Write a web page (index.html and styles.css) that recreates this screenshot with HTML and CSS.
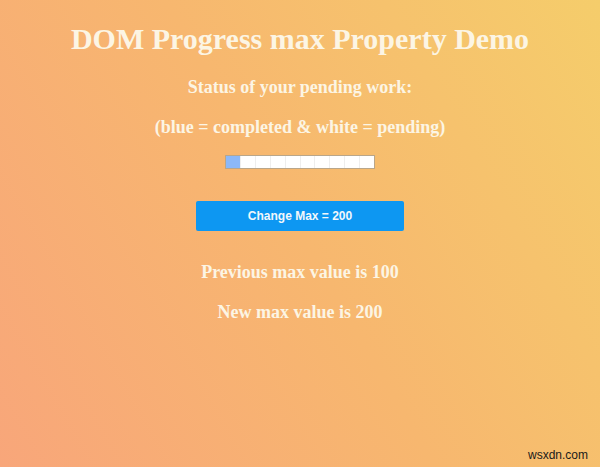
FILE: index.html
```html
<!DOCTYPE html>
<html>
<head>
<meta charset="utf-8">
<link rel="stylesheet" href="styles.css">
</head>
<body>
<div class="page">
  <h1 class="title">DOM Progress max Property Demo</h1>
  <p class="line">Status of your pending work:</p>
  <p class="line">(blue = completed &amp; white = pending)</p>
  <div class="bar">
    <span class="seg done"></span><span class="seg"></span><span class="seg"></span><span class="seg"></span><span class="seg"></span><span class="seg"></span><span class="seg"></span><span class="seg"></span><span class="seg"></span><span class="seg"></span>
  </div>
  <button class="btn">Change Max = 200</button>
  <p class="line result">Previous max value is 100</p>
  <p class="line">New max value is 200</p>
  <div class="mark">wsxdn.com</div>
</div>
</body>
</html>
```
FILE: styles.css
```css
html, body {
  margin: 0;
  height: 100%;
}
body {
  background: linear-gradient(60deg, #f8a67a 0%, #f7b76f 50%, #f5cd6b 100%);
  font-family: "Liberation Serif", "Times New Roman", serif;
  color: #fcf5e4;
  overflow: hidden;
}
.page {
  position: relative;
  height: 467px;
  display: flex;
  flex-direction: column;
  align-items: center;
  padding-top: 21px;
  box-sizing: border-box;
}
.title {
  margin: 0;
  font-size: 30px;
  font-weight: bold;
  line-height: 36px;
}
.line {
  margin: 0;
  margin-top: 18px;
  font-size: 18px;
  font-weight: bold;
  line-height: 24px;
}
.line + .line { margin-top: 16px; }
.bar {
  margin-top: 16px;
  width: 148px;
  height: 12px;
  border: 1px solid #b9a68a;
  display: flex;
  background: #fff;
}
.seg {
  flex: 1;
  border-left: 1px solid #eeeeee;
}
.seg:first-child { border-left: none; }
.seg.done {
  background: #8cb8f8;
}
.btn {
  margin-top: 32px;
  width: 208px;
  height: 30px;
  border: none;
  border-radius: 2px;
  background: #0d97f2;
  color: #f2f7fb;
  font-family: "Liberation Sans", Arial, sans-serif;
  font-weight: bold;
  font-size: 12px;
  padding: 0;
}
.line.result { margin-top: 29px; }
.mark {
  position: absolute;
  right: 12px;
  bottom: 5px;
  font-family: "Liberation Sans", Arial, sans-serif;
  font-size: 12px;
  color: #1a1a1a;
}
```
